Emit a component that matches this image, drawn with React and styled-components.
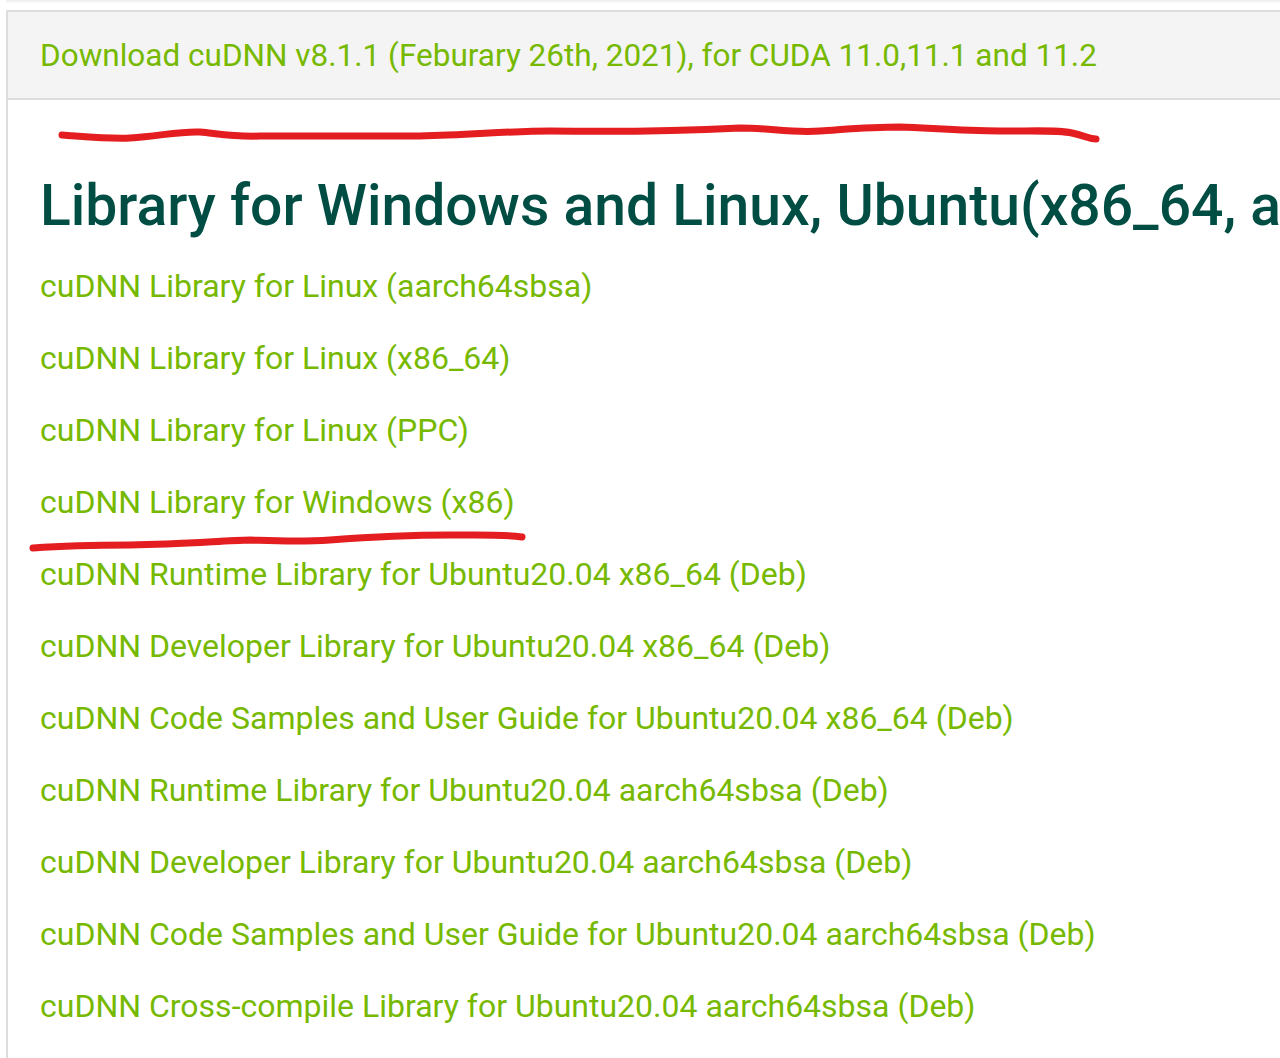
import styled, { createGlobalStyle } from 'styled-components';

const GlobalStyle = createGlobalStyle`
	html, body {
		margin: 0;
		padding: 0;
		background: #ffffff;
	}
	body {
		font-family: Roboto, "Noto Sans", sans-serif;
		overflow: hidden;
	}
`;

const Page = styled.div`
	position: relative;
	width: 1280px;
	height: 1058px;
	overflow: hidden;
	background: #ffffff;
`;

const TopShadow = styled.div`
	height: 3px;
	margin-left: 6px;
	background: linear-gradient(#ececec, #fafafa);
`;

const Panel = styled.section`
	margin: 7px 0 0 6px;
	width: 1400px;
	border-top: 2px solid #dddddd;
	border-left: 2px solid #dddddd;
	min-height: 1100px;
`;

const PanelHeader = styled.div`
	display: flex;
	align-items: center;
	height: 86px;
	padding-left: 32px;
	background: #f4f4f4;
	border-bottom: 2px solid #dddddd;
`;

const HeaderLink = styled.a`
	color: #76b900;
	font-size: 31.5px;
	text-decoration: none;
	white-space: nowrap;
`;

const Body = styled.div`
	padding: 72px 0 0 32px;
`;

const Title = styled.h1`
	margin: 0 0 10px;
	color: #004d43;
	font-size: 57px;
	font-weight: 500;
	line-height: 68px;
	white-space: nowrap;
`;

const LinkList = styled.ul`
	list-style: none;
	margin: 0;
	padding: 0;
	display: flex;
	flex-direction: column;
`;

const LinkItem = styled.li`
	height: 72px;
	display: flex;
	align-items: center;
`;

const DownloadLink = styled.a`
	color: #76b900;
	font-size: 32px;
	text-decoration: none;
	white-space: nowrap;
`;

const Scribble = styled.svg`
	position: absolute;
	left: 0;
	top: 0;
	pointer-events: none;
`;

const links = [
	'cuDNN Library for Linux (aarch64sbsa)',
	'cuDNN Library for Linux (x86_64)',
	'cuDNN Library for Linux (PPC)',
	'cuDNN Library for Windows (x86)',
	'cuDNN Runtime Library for Ubuntu20.04 x86_64 (Deb)',
	'cuDNN Developer Library for Ubuntu20.04 x86_64 (Deb)',
	'cuDNN Code Samples and User Guide for Ubuntu20.04 x86_64 (Deb)',
	'cuDNN Runtime Library for Ubuntu20.04 aarch64sbsa (Deb)',
	'cuDNN Developer Library for Ubuntu20.04 aarch64sbsa (Deb)',
	'cuDNN Code Samples and User Guide for Ubuntu20.04 aarch64sbsa (Deb)',
	'cuDNN Cross-compile Library for Ubuntu20.04 aarch64sbsa (Deb)',
];

export default function App() {
	return (
		<Page>
			<GlobalStyle />
			<TopShadow />
			<Panel>
				<PanelHeader>
					<HeaderLink href="#">
						Download cuDNN v8.1.1 (Feburary 26th, 2021), for CUDA 11.0,11.1 and 11.2
					</HeaderLink>
				</PanelHeader>
				<Body>
					<Title>Library for Windows and Linux, Ubuntu(x86_64, armsbsa, PPC architecture)</Title>
					<LinkList>
						{links.map((text) => (
							<LinkItem key={text}>
								<DownloadLink href="#">{text}</DownloadLink>
							</LinkItem>
						))}
					</LinkList>
				</Body>
			</Panel>
			{/* hand-drawn red marks over the screenshot */}
			<Scribble width="1280" height="1058" viewBox="0 0 1280 1058">
				<path
					d="M62 135 C 90 137, 110 139, 130 138 C 160 136, 180 131, 200 132 C 220 134, 235 137, 260 136 L 420 136 C 470 135, 510 131, 550 131 C 620 132, 680 131, 740 128 C 770 128, 790 133, 820 131 C 850 129, 870 127, 900 127 C 930 128, 960 131, 1000 131 C 1040 131, 1060 130, 1072 133 C 1085 136, 1090 139, 1096 139"
					fill="none"
					stroke="#e41e20"
					strokeWidth="7"
					strokeLinecap="round"
				/>
				<path
					d="M33 548 C 60 546, 90 545, 130 545 C 180 544, 220 541, 250 540 C 280 541, 300 542, 330 540 C 370 537, 410 535, 450 535 C 480 535, 500 534, 522 537"
					fill="none"
					stroke="#e41e20"
					strokeWidth="7"
					strokeLinecap="round"
				/>
			</Scribble>
		</Page>
	);
}
